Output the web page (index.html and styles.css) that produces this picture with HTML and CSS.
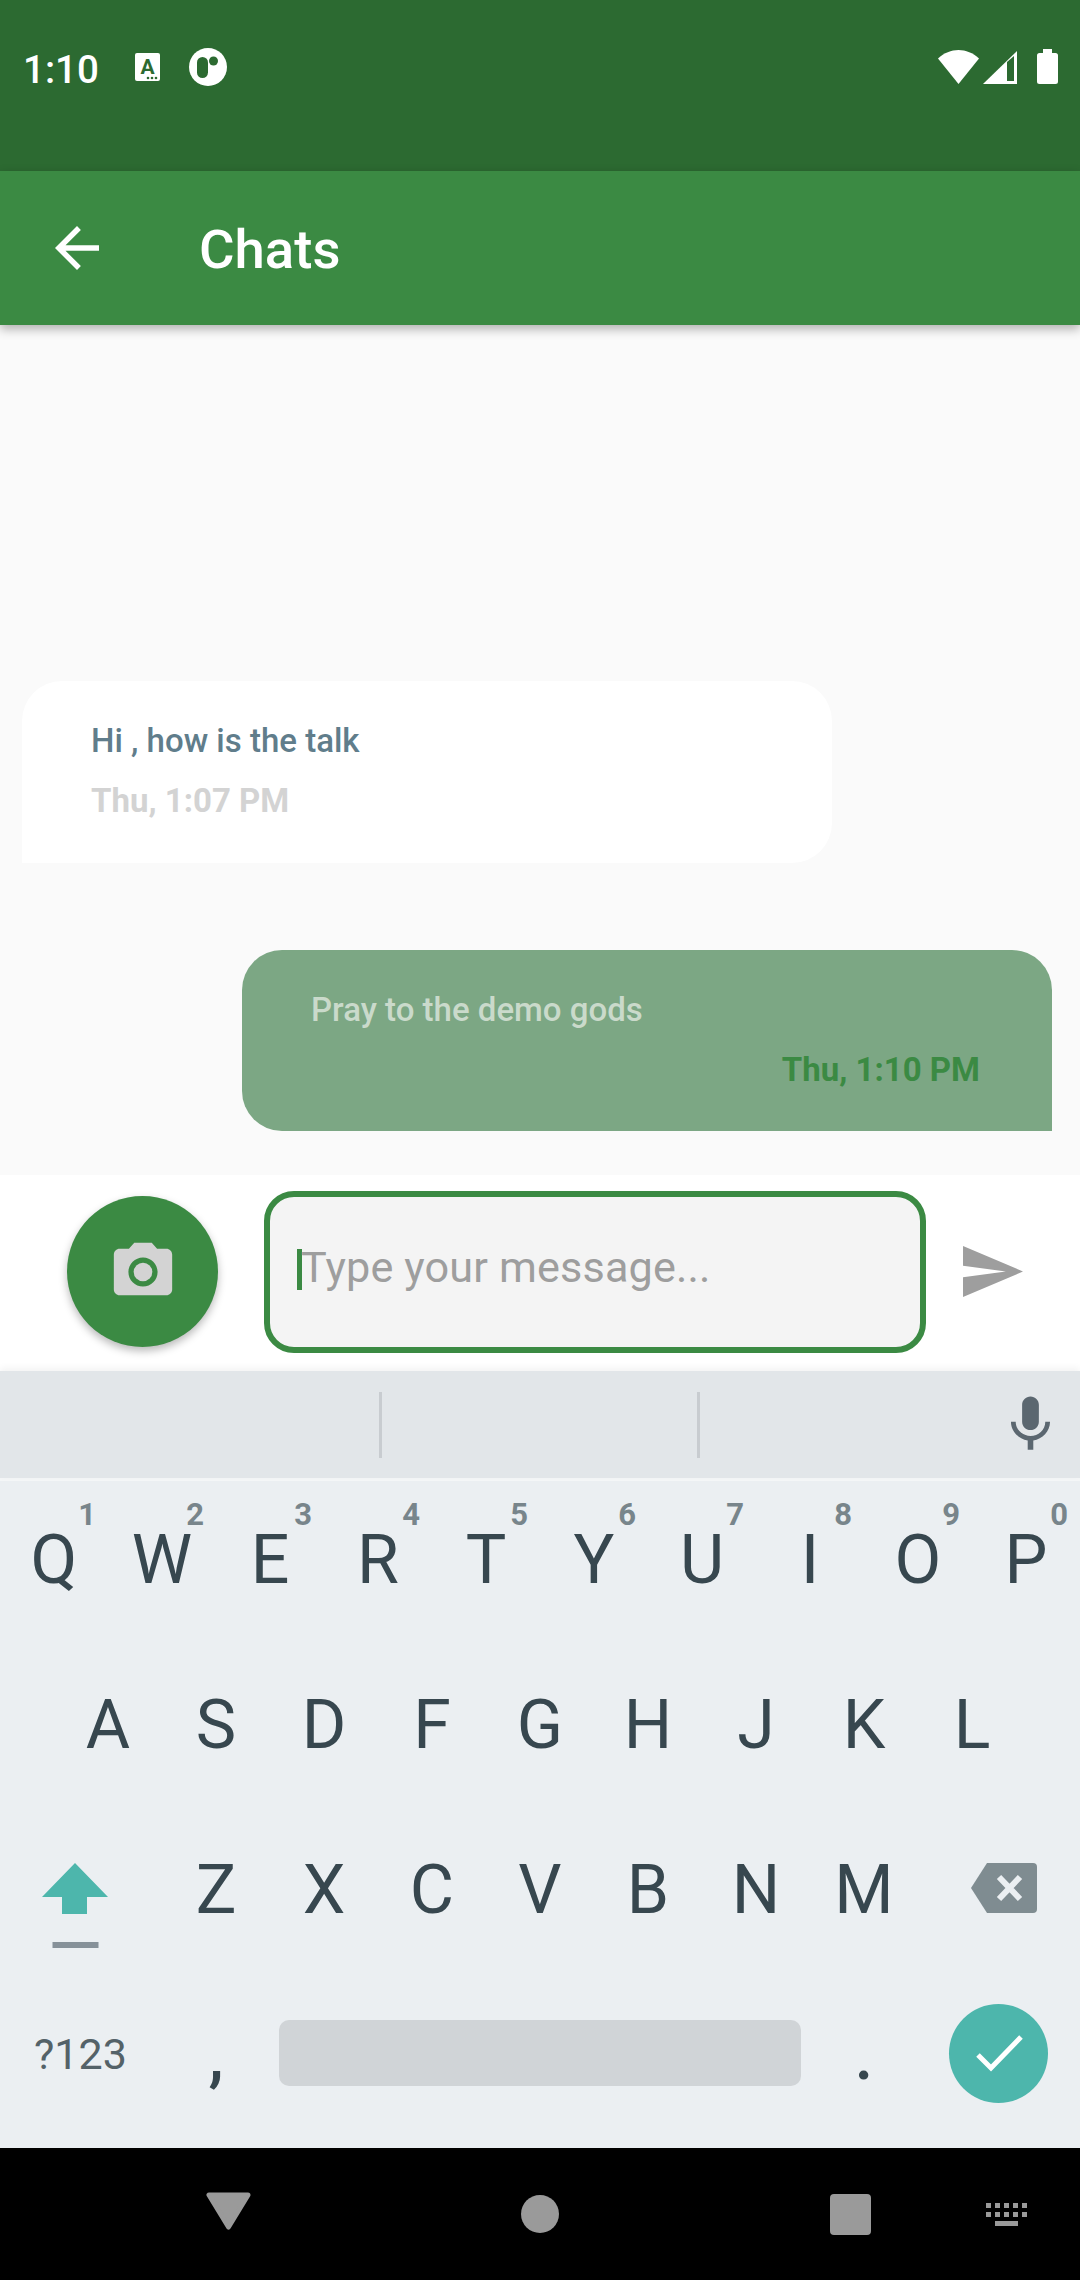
FILE: index.html
```html
<!DOCTYPE html>
<html lang="en">
<head>
<meta charset="utf-8">
<title>Chats</title>
<link rel="stylesheet" href="styles.css">
</head>
<body>
<div class="screen">
  <header class="status">
    <span class="time">1:10</span>
    <svg class="st-a" width="25" height="40" viewBox="135 47 25 40"><rect x="135" y="53" width="25" height="28" rx="2" fill="#fff"/><text x="147.5" y="74" class="st-a-letter">A</text><circle cx="148" cy="78" r="1.3" fill="#2c6a31"/><circle cx="152" cy="78" r="1.3" fill="#2c6a31"/><circle cx="156" cy="78" r="1.3" fill="#2c6a31"/></svg>
    <svg class="st-o" width="38" height="40" viewBox="189 47 38 40"><circle cx="208" cy="67" r="19" fill="#fff"/><rect x="197" y="57" width="11" height="21" rx="5.500" fill="#2c6a31"/><circle cx="213.500" cy="61" r="4.500" fill="#2c6a31"/></svg>
    <svg class="st-wifi" width="41" height="40" viewBox="938 47 41 40"><path d="M958.500 84 938 58.500C950 47 967 47 979 58.500Z" fill="#fff"/></svg>
    <svg class="st-signal" width="34" height="40" viewBox="983 47 34 40"><path d="M983 84 1017 51V84Z" fill="#fff"/><path d="M1007 62 1014 56V81H1007Z" fill="#2c6a31"/></svg>
    <svg class="st-bat" width="21" height="40" viewBox="1037 47 21 40"><path d="M1043 49H1052V53H1055.500A2.500 2.500 0 0 1 1058 55.500V81.500A2.500 2.500 0 0 1 1055.500 84H1039.500A2.500 2.500 0 0 1 1037 81.500V55.500A2.500 2.500 0 0 1 1039.500 53H1043Z" fill="#fff"/></svg>
  </header>

  <div class="appbar">
    <svg class="back" width="66" height="66" viewBox="0 0 24 24"><path d="M20 11H7.830l5.590-5.590L12 4l-8 8 8 8 1.410-1.410L7.830 13H20v-2z" fill="#fff"/></svg>
    <h1 class="title">Chats</h1>
  </div>

  <main class="chat">
    <div class="bubble incoming">
      <p class="msg">Hi , how is the talk</p>
      <p class="stamp">Thu, 1:07 PM</p>
    </div>
    <div class="bubble outgoing">
      <p class="msg">Pray to the demo gods</p>
      <p class="stamp">Thu, 1:10 PM</p>
    </div>
  </main>

  <section class="composer">
    <button class="fab" type="button" aria-label="Camera">
      <svg width="70" height="70" viewBox="0 0 24 24"><circle cx="12" cy="12" r="3.200" fill="#d3d3d3"/><path d="M9 2L7.170 4H4c-1.100 0-2 .9-2 2v12c0 1.100.9 2 2 2h16c1.100 0 2-.9 2-2V6c0-1.100-.9-2-2-2h-3.170L15 2H9zm3 15c-2.760 0-5-2.240-5-5s2.240-5 5-5 5 2.240 5 5-2.240 5-5 5z" fill="#d3d3d3"/></svg>
    </button>
    <div class="field"><span class="caret"></span><span class="placeholder">Type your message...</span></div>
    <svg class="send" width="60" height="51" viewBox="2 3 21 18" preserveAspectRatio="none"><path d="M2.010 21L23 12 2.010 3 2 10l15 2-15 2z" fill="#9e9e9e"/></svg>
  </section>

  <div class="strip">
    <span class="divider first"></span>
    <span class="divider second"></span>
    <svg class="mic" width="67" height="67" viewBox="0 0 24 24"><path d="M12 14c1.660 0 2.990-1.340 2.990-3L15 5c0-1.660-1.340-3-3-3S9 3.340 9 5v6c0 1.660 1.340 3 3 3zm5.300-3c0 3-2.540 5.100-5.300 5.100S6.700 14 6.700 11H5c0 3.410 2.720 6.230 6 6.720V21h2v-3.280c3.280-.48 6-3.300 6-6.720h-1.700z" fill="#5b6770"/></svg>
  </div>

  <section class="keyboard">
    <div class="row">
      <span class="key">Q<sup class="digit">1</sup></span>
      <span class="key">W<sup class="digit">2</sup></span>
      <span class="key">E<sup class="digit">3</sup></span>
      <span class="key">R<sup class="digit">4</sup></span>
      <span class="key">T<sup class="digit">5</sup></span>
      <span class="key">Y<sup class="digit">6</sup></span>
      <span class="key">U<sup class="digit">7</sup></span>
      <span class="key">I<sup class="digit">8</sup></span>
      <span class="key">O<sup class="digit">9</sup></span>
      <span class="key">P<sup class="digit">0</sup></span>
    </div>
    <div class="row inset">
      <span class="key">A</span><span class="key">S</span><span class="key">D</span><span class="key">F</span><span class="key">G</span><span class="key">H</span><span class="key">J</span><span class="key">K</span><span class="key">L</span>
    </div>
    <div class="row">
      <svg class="wide-key" width="162" height="165" viewBox="0 1811 162 165"><path d="M75 1863 108 1897H87V1914H62V1897H42Z" fill="#4db6ac"/><rect x="52.500" y="1942" width="46" height="6" fill="#869199"/></svg>
      <span class="key">Z</span><span class="key">X</span><span class="key">C</span><span class="key">V</span><span class="key">B</span><span class="key">N</span><span class="key">M</span>
      <svg class="wide-key" width="162" height="165" viewBox="918 1811 162 165"><path d="M971 1888 987 1863H1033Q1037 1863 1037 1867V1909Q1037 1913 1033 1913H987Z" fill="#7f8c91"/><path d="M999 1877 1020 1899M1020 1877 999 1899" stroke="#ebeff2" stroke-width="6" fill="none"/></svg>
    </div>
    <div class="row bottom">
      <span class="symbols">?123</span>
      <span class="key punct">,</span>
      <span class="space"></span>
      <span class="key punct">.</span>
      <span class="enter">
        <svg width="99" height="99" viewBox="949 2004 99 99"><path d="M978 2055 991 2068 1021 2037" stroke="#fff" stroke-width="5" fill="none"/></svg>
      </span>
    </div>
  </section>

  <nav class="nav">
    <svg class="nav-back" width="45" height="50" viewBox="206 2190 45 50"><path d="M209 2195H248L228.500 2227Z" fill="#9a9a9a" stroke="#9a9a9a" stroke-width="5" stroke-linejoin="round"/></svg>
    <span class="nav-home"></span>
    <span class="nav-recent"></span>
    <svg class="nav-kbd" width="41" height="50" viewBox="986 2190 41 50"><g fill="#9a9a9a"><rect x="986" y="2203" width="5" height="5"/><rect x="995" y="2203" width="5" height="5"/><rect x="1004" y="2203" width="5" height="5"/><rect x="1013" y="2203" width="5" height="5"/><rect x="1022" y="2203" width="5" height="5"/><rect x="986" y="2212" width="5" height="5"/><rect x="995" y="2212" width="5" height="5"/><rect x="1004" y="2212" width="5" height="5"/><rect x="1013" y="2212" width="5" height="5"/><rect x="1022" y="2212" width="5" height="5"/><rect x="995" y="2221" width="23" height="5"/></g></svg>
  </nav>
</div>
</body>
</html>
```

FILE: styles.css
```css
* { box-sizing: border-box; }
html, body { margin: 0; padding: 0; }
body { font-family: Roboto, "Noto Sans", sans-serif; background: #fafafa; }
.screen { width: 1080px; height: 2280px; display: flex; flex-direction: column; overflow: hidden; }

/* status bar */
.status { height: 171px; flex: none; background: #2c6a31; display: flex; align-items: flex-start; padding: 47px 22px 0 23px; color: #fff; }
.status svg { display: block; flex: none; }
.time { width: 74px; flex: none; font-size: 38.5px; line-height: 40px; padding-top: 3px; font-weight: 500; }
.st-a { margin-left: 38px; }
.st-a-letter { font-family: Roboto, sans-serif; font-weight: 700; font-size: 21px; text-anchor: middle; fill: #2c6a31; }
.st-o { margin-left: 29px; }
.st-wifi { margin-left: auto; }
.st-signal { margin-left: 4px; }
.st-bat { margin-left: 20px; }

/* app bar */
.appbar { height: 154px; flex: none; background: #3b8a43; display: flex; align-items: center; position: relative; z-index: 2; box-shadow: 0 4px 10px rgba(0, 0, 0, .3); }
.back { margin-left: 44px; flex: none; }
.title { margin: 2px 0 0 89px; font-size: 54.5px; font-weight: 500; color: #fff; line-height: 64px; }

/* conversation */
.chat { height: 850px; flex: none; background: #fafafa; padding: 356px 28px 0 22px; display: flex; flex-direction: column; gap: 87px; }
.bubble { width: 810px; height: 182px; padding: 40px 69px 0; border-radius: 40px; }
.bubble p { margin: 0; font-size: 33px; line-height: 40px; font-weight: 500; }
.bubble .stamp { font-weight: 700; }
.msg { margin-bottom: 20px !important; }
.incoming { background: #fff; border-bottom-left-radius: 0; }
.incoming .msg { color: #607d8b; }
.incoming .stamp { color: #d3d3d3; }
.outgoing { align-self: flex-end; height: 181px; background: #7ca784; border-bottom-right-radius: 0; }
.outgoing .msg { color: #cadacb; }
.outgoing .stamp { color: #3b8a43; text-align: right; padding-right: 3px; }

/* composer */
.composer { height: 196px; flex: none; background: #fff; display: flex; align-items: flex-start; padding: 16px 0 0 67px; }
.fab { width: 151px; height: 151px; flex: none; margin-top: 5px; padding: 0; border: 0; border-radius: 50%; background: #3b8a43; display: flex; align-items: center; justify-content: center; box-shadow: 0 4px 8px rgba(0, 0, 0, .28); }
.fab svg { display: block; }
.field { width: 662px; height: 162px; flex: none; margin-left: 46px; border: 6px solid #3b8a43; border-radius: 30px; background: #f4f4f4; display: flex; align-items: center; padding: 0 0 6px 27px; }
.caret { width: 5px; height: 41px; flex: none; background: #3b8a43; }
.placeholder { margin: 0 0 2px -1px; font-size: 43.2px; letter-spacing: .15px; line-height: 50px; color: #9e9e9e; white-space: nowrap; }
.send { margin: 55px 0 0 37px; flex: none; display: block; }

/* keyboard suggestions */
.strip { height: 107px; flex: none; background: #e2e6e9; display: flex; align-items: flex-start; padding-top: 21px; position: relative; box-shadow: 0 -3px 7px rgba(0, 0, 0, .05); }
.divider { width: 3px; height: 66px; flex: none; background: #c8ccd0; }
.divider.first { margin-left: 379px; }
.divider.second { margin-left: 315px; }
.mic { margin: -1px 16px 0 auto; flex: none; display: block; }

/* keyboard */
.keyboard { height: 670px; flex: none; background: #ebeff2; border-top: 3px solid #f4f6f7; color: #37474f; }
.row { height: 165px; display: flex; align-items: flex-start; }
.row.inset { padding-left: 54px; }
.key { width: 108px; height: 165px; flex: none; position: relative; text-align: center; font-size: 68px; line-height: 159px; font-weight: 400; }
.digit { position: absolute; top: 18px; right: 12px; font-size: 31px; line-height: 31px; font-weight: 700; color: #78858b; vertical-align: baseline; }
.wide-key { flex: none; display: block; }
.row.bottom { height: 172px; }
.symbols { width: 162px; flex: none; padding-left: 34px; font-size: 43px; line-height: 157px; color: #546268; }
.punct { line-height: 160px; font-weight: 500; }
.space { width: 522px; height: 66px; flex: none; margin: 44px 9px 0; border-radius: 10px; background: #d0d4d7; }
.enter { width: 99px; height: 99px; flex: none; margin: 28px 0 0 31px; border-radius: 50%; background: #4db6ac; }
.enter svg { display: block; }

/* navigation */
.nav { height: 132px; flex: none; background: #000; display: flex; align-items: flex-start; padding: 42px 0 0 206px; }
.nav svg { display: block; flex: none; }
.nav-home { width: 38px; height: 38px; flex: none; margin: 5px 0 0 270px; border-radius: 50%; background: #9a9a9a; }
.nav-recent { width: 41px; height: 41px; flex: none; margin: 4px 0 0 271px; border-radius: 4px; background: #9a9a9a; }
.nav-kbd { margin-left: 115px; }
```
